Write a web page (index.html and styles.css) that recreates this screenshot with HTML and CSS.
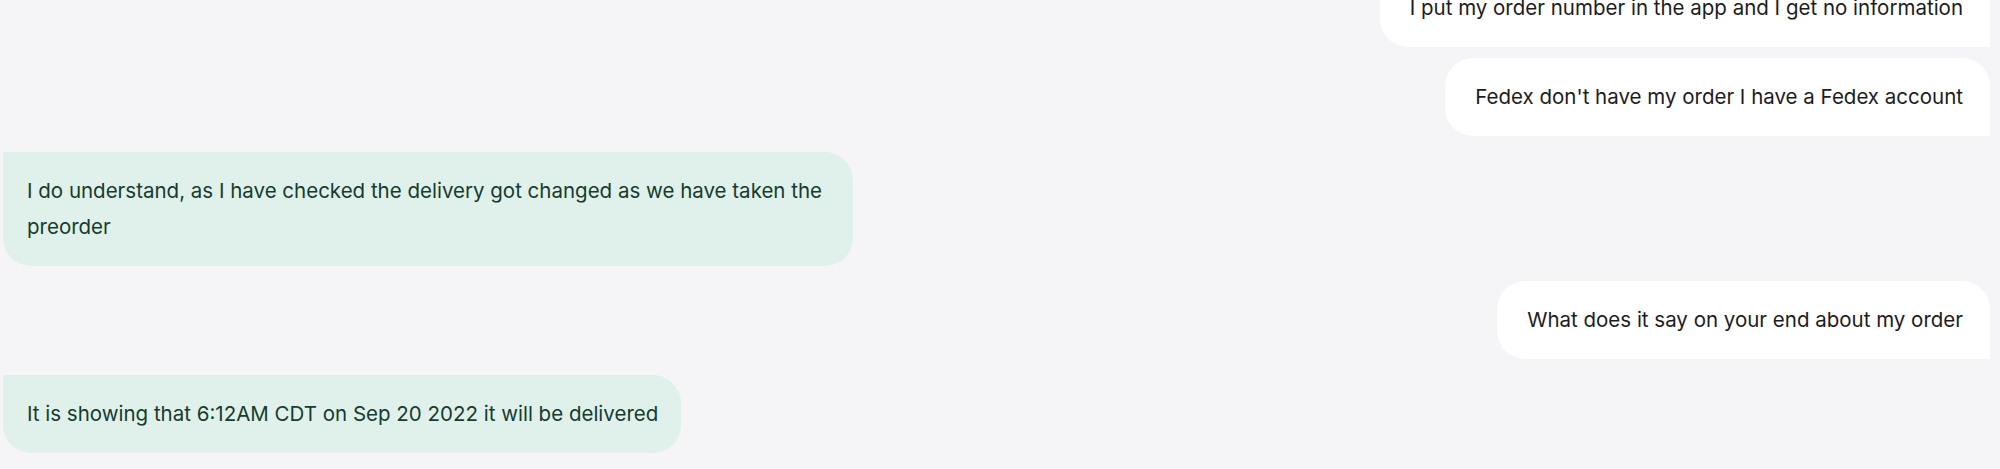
FILE: index.html
```html
<!DOCTYPE html>
<html lang="en">
<head>
<meta charset="utf-8">
<title>Chat</title>
<link rel="stylesheet" href="styles.css">
</head>
<body>
<main class="chat">
  <div class="thread">
    <div class="msg msg-out">I put my order number in the app and I get no information</div>
    <div class="msg msg-out same">Fedex don't have my order I have a Fedex account</div>
    <div class="msg msg-in switch">I do understand, as I have checked the delivery got changed as we have taken the preorder</div>
    <div class="msg msg-out switch">What does it say on your end about my order</div>
    <div class="msg msg-in switch">It is showing that 6:12AM CDT on Sep 20 2022 it will be delivered</div>
  </div>
</main>
</body>
</html>
```
FILE: styles.css
```css
* { box-sizing: border-box; }
html, body { margin: 0; padding: 0; }
body {
  background: #f5f5f7;
  font-family: "Inter", "Noto Sans", sans-serif;
  height: 469px;
  overflow: hidden;
}
.chat {
  padding: 0 10px 0 3px;
}
.thread {
  display: flex;
  flex-direction: column;
  margin-top: -31px;
}
.msg {
  max-width: 850px;
  font-size: 20.5px;
  line-height: 36px;
  padding: 21px 23px;
}
.msg-out {
  align-self: flex-end;
  background: #ffffff;
  color: #1c1c1e;
  padding: 21px 27px 21px 30px;
  border-radius: 28px 28px 0 28px;
}
.msg-in {
  align-self: flex-start;
  background: #dff1ea;
  color: #173b2f;
  padding: 21px 23px 21px 24px;
  border-radius: 0 28px 28px 28px;
}
.same { margin-top: 11px; }
.switch { margin-top: 15.5px; }
```
